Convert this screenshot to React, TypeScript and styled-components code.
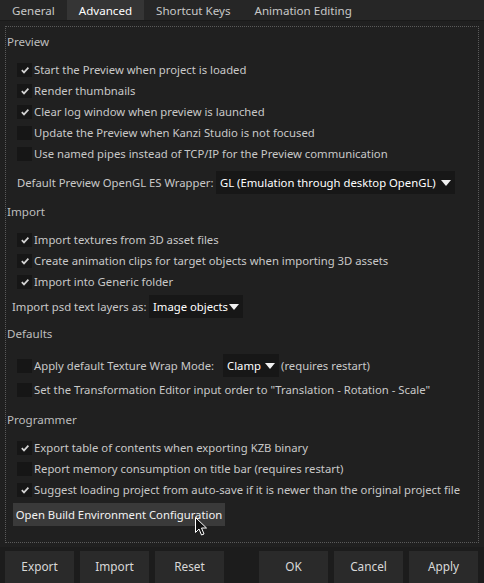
import React from 'react'
import styled, { createGlobalStyle } from 'styled-components'

const Global = createGlobalStyle`
  html, body {
    margin: 0;
    padding: 0;
    background: #202020;
  }
  body {
    font-family: "Noto Sans", "Open Sans", sans-serif;
    font-size: 11.3px;
    color: #c8c8c8;
  }
`

type Item = { label: string; checked: boolean }

const preview: Item[] = [
  { label: 'Start the Preview when project is loaded', checked: true },
  { label: 'Render thumbnails', checked: true },
  { label: 'Clear log window when preview is launched', checked: true },
  { label: 'Update the Preview when Kanzi Studio is not focused', checked: false },
  { label: 'Use named pipes instead of TCP/IP for the Preview communication', checked: false },
]

const importItems: Item[] = [
  { label: 'Import textures from 3D asset files', checked: true },
  { label: 'Create animation clips for target objects when importing 3D assets', checked: true },
  { label: 'Import into Generic folder', checked: true },
]

const programmer: Item[] = [
  { label: 'Export table of contents when exporting KZB binary', checked: true },
  { label: 'Report memory consumption on title bar (requires restart)', checked: false },
  { label: 'Suggest loading project from auto-save if it is newer than the original project file', checked: true },
]

const tabs = ['General', 'Advanced', 'Shortcut Keys', 'Animation Editing']

function Check({ checked }: { checked: boolean }) {
  return (
    <Box>
      {checked && (
        <svg width="10" height="10" viewBox="0 0 10 10">
          <path d="M1.8 5.2 L4 7.4 L8.4 2.6" fill="none" stroke="#d4d4d4" strokeWidth="1.7" />
        </svg>
      )}
    </Box>
  )
}

function Arrow() {
  return (
    <ArrowIcon width="10" height="6" viewBox="0 0 10 6">
      <path d="M0 0 L10 0 L5 6 Z" fill="#f2f2f2" />
    </ArrowIcon>
  )
}

function CheckRow({ item }: { item: Item }) {
  return (
    <Row>
      <Check checked={item.checked} />
      <span>{item.label}</span>
    </Row>
  )
}

export default function App() {
  return (
    <>
      <Global />
      <Window>
        <TabBar>
          {tabs.map((t) => (
            <Tab key={t} $active={t === 'Advanced'}>{t}</Tab>
          ))}
        </TabBar>
        <Panel>
          <SectionTitle $top={5}>Preview</SectionTitle>
          <Group $top={7}>
            {preview.map((i) => <CheckRow key={i.label} item={i} />)}
          </Group>
          <FieldRow $top={7} $indent={10}>
            <Label $width={199}>Default Preview OpenGL ES Wrapper:</Label>
            <Select $width={239}>
              <span>GL (Emulation through desktop OpenGL)</span>
              <Arrow />
            </Select>
          </FieldRow>
          <SectionTitle $top={8}>Import</SectionTitle>
          <Group $top={7}>
            {importItems.map((i) => <CheckRow key={i.label} item={i} />)}
          </Group>
          <FieldRow $top={3} $indent={5}>
            <Label $width={137}>Import psd text layers as:</Label>
            <Select $width={94}>
              <span>Image objects</span>
              <Arrow />
            </Select>
          </FieldRow>
          <SectionTitle $top={6}>Defaults</SectionTitle>
          <Row $top={11}>
            <Check checked={false} />
            <Label $width={187}>Apply default Texture Wrap Mode:</Label>
            <Select $width={56}>
              <span>Clamp</span>
              <Arrow />
            </Select>
            <span>(requires restart)</span>
          </Row>
          <Row $top={3}>
            <Check checked={false} />
            <span>Set the Transformation Editor input order to "Translation - Rotation - Scale"</span>
          </Row>
          <SectionTitle $top={10}>Programmer</SectionTitle>
          <Group $top={7}>
            {programmer.map((i) => <CheckRow key={i.label} item={i} />)}
          </Group>
          <ActionWrap>
            <ActionButton>Open Build Environment Configuration</ActionButton>
            <Cursor width="13" height="20" viewBox="0 0 13 20">
              <path d="M0.5 0.5 L0.5 15.5 L4 12 L6.5 18 L9 17 L6.5 11 L11.5 11 Z" fill="#111" stroke="#fff" strokeWidth="1" />
            </Cursor>
          </ActionWrap>
        </Panel>
        <ButtonBar>
          <ButtonGroup>
            <Btn>Export</Btn>
            <Btn>Import</Btn>
            <Btn>Reset</Btn>
          </ButtonGroup>
          <ButtonGroup>
            <Btn>OK</Btn>
            <Btn>Cancel</Btn>
            <Btn>Apply</Btn>
          </ButtonGroup>
        </ButtonBar>
      </Window>
    </>
  )
}

const Window = styled.div`
  width: 484px;
  height: 583px;
  display: flex;
  flex-direction: column;
  background: #202020;
  overflow: hidden;
`

const TabBar = styled.div`
  display: flex;
  height: 20px;
  background: #262626;
  border-bottom: 1px solid #1a1a1a;
`

const Tab = styled.div<{ $active?: boolean }>`
  padding: 0 12px;
  line-height: 21px;
  font-size: 11.6px;
  color: ${(p) => (p.$active ? '#ffffff' : '#c8c8c8')};
  background: ${(p) => (p.$active ? '#353535' : 'transparent')};
`

const Panel = styled.div`
  margin: 5px 5px 0 5px;
  height: 517px;
  box-sizing: border-box;
  border: 1px dotted #5a5a5a;
  display: flex;
  flex-direction: column;
  padding-left: 1px;
`

const SectionTitle = styled.div<{ $top: number }>`
  margin-top: ${(p) => p.$top}px;
  line-height: 20px;
  height: 20px;
  color: #bdbdbd;
  font-size: 11.6px;
`

const Group = styled.div<{ $top: number }>`
  margin-top: ${(p) => p.$top}px;
  display: flex;
  flex-direction: column;
`

const Row = styled.div<{ $top?: number }>`
  margin-top: ${(p) => p.$top ?? 0}px;
  height: 21px;
  display: flex;
  align-items: center;
  padding-left: 10px;
  gap: 2px;
  color: #c8c8c8;
  white-space: nowrap;
`

const Box = styled.span`
  width: 15px;
  height: 14px;
  background: #161616;
  display: inline-flex;
  align-items: center;
  justify-content: center;
  flex: none;
`

const FieldRow = styled.div<{ $top: number; $indent: number }>`
  margin-top: ${(p) => p.$top}px;
  padding-left: ${(p) => p.$indent}px;
  height: 23px;
  display: flex;
  align-items: center;
  color: #c8c8c8;
  white-space: nowrap;
`

const Label = styled.span<{ $width: number }>`
  width: ${(p) => p.$width}px;
  flex: none;
`

const Select = styled.div<{ $width: number }>`
  width: ${(p) => p.$width}px;
  height: 23px;
  box-sizing: border-box;
  flex: none;
  background: #171717;
  color: #ffffff;
  display: flex;
  align-items: center;
  padding: 0 4px 0 4px;
  justify-content: space-between;
  overflow: hidden;
`

const ArrowIcon = styled.svg`
  flex: none;
`

const ActionWrap = styled.div`
  position: relative;
  margin: 3px 0 0 6px;
  align-self: flex-start;
`

const ActionButton = styled.div`
  width: 212px;
  height: 23px;
  line-height: 23px;
  text-align: center;
  background: #3a3a3a;
  color: #f2f2f2;
  white-space: nowrap;
`

const Cursor = styled.svg`
  position: absolute;
  left: 182px;
  top: 14px;
`

const ButtonBar = styled.div`
  margin-top: 4px;
  flex: 1;
  background: #1c1c1c;
  display: flex;
  justify-content: space-between;
  padding: 4px 6px 0 5px;
`

const ButtonGroup = styled.div`
  display: flex;
  gap: 6px;
`

const Btn = styled.div`
  width: 69px;
  height: 32px;
  background: #2a2a2a;
  color: #d8d8d8;
  font-size: 11.8px;
  display: flex;
  align-items: center;
  justify-content: center;
  padding-bottom: 2px;
  box-sizing: border-box;
`
